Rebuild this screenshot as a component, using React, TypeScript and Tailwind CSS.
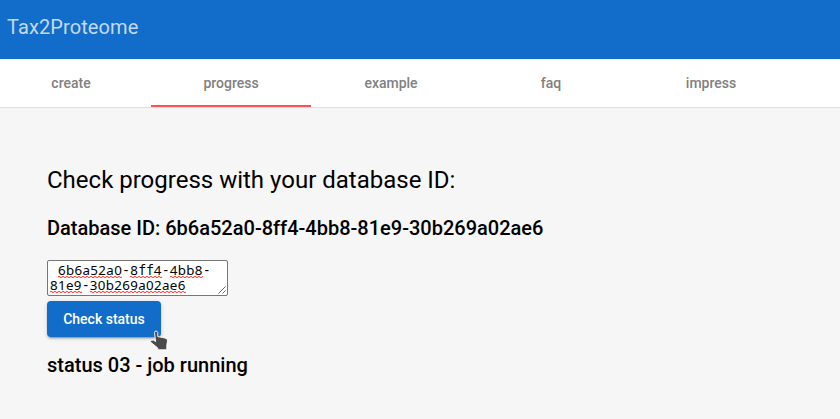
import React from "react";

const tabs = ["create", "progress", "example", "faq", "impress"];

const Misspelled = ({ children }: { children: React.ReactNode }) => (
  <span className="bg-[linear-gradient(90deg,#ff5050_50%,#ffd8d8_50%),linear-gradient(90deg,#ffd8d8_50%,#ff5050_50%)] bg-[length:4px_1px,4px_1px] bg-[position:0_calc(100%_-_2px),0_calc(100%_-_1px)] bg-repeat-x font-['Noto_Sans',sans-serif] tracking-[0.35px]">
    {children}
  </span>
);

export default function App() {
  return (
    <div className="min-h-[419px] bg-[#f6f6f6] font-[Roboto,sans-serif] text-black">
      <header className="flex h-[59px] items-start bg-[#116cca] pl-[7px] pt-[11px]">
        <h1 className="text-[20px] font-normal leading-8 tracking-[0.1px] text-white/75">Tax2Proteome</h1>
      </header>
      <nav className="flex h-[49px] border-b border-[#dfdfdf] bg-white pr-[49px]">
        {tabs.map((tab) => (
          <button
            key={tab}
            className={
              tab === "progress"
                ? "w-40 shrink-0 border-b-2 border-[#ff5252] pt-0.5 text-sm font-medium text-[#808080] first:-ml-[9px]"
                : "w-40 shrink-0 border-b-2 border-transparent pt-0.5 text-sm font-medium text-[#808080] first:-ml-[9px]"
            }
          >
            {tab}
          </button>
        ))}
      </nav>
      <main className="flex flex-col items-start pl-[47px] pt-14">
        <h2 className="text-[24px] font-normal leading-8">Check progress with your database ID:</h2>
        <h3 className="mt-4 text-[20px] font-medium leading-8">
          Database ID: 6b6a52a0-8ff4-4bb8-81e9-30b269a02ae6
        </h3>
        <div className="relative mt-4 h-9 w-[181px] rounded-[2px] border border-[#767676] bg-white px-0.5 py-[2px] font-['DejaVu_Sans_Mono',monospace] text-[13.333px] leading-[15px]">
          <div className="h-[15px] whitespace-pre">
            {" "}
            <Misspelled>6b6a52a0</Misspelled>-
            <Misspelled>
              8<span className="font-['DejaVu_Sans_Mono',monospace] tracking-[-0.2px]">ff</span>4
            </Misspelled>
            -<Misspelled>4bb8</Misspelled>-
          </div>
          <div className="h-[15px]">
            <Misspelled>81e9</Misspelled>-<Misspelled>30b269a02ae6</Misspelled>
          </div>
          <svg className="absolute bottom-px right-px h-2 w-2" viewBox="0 0 8 8" fill="none" stroke="#555">
            <path d="M0.5 7.5 7.5 0.5M4.5 7.5 7.5 4.5" strokeWidth="0.9" />
          </svg>
        </div>
        <div className="relative mt-[5px]">
          <button className="h-9 w-[114px] rounded bg-[#116cca] text-sm font-medium text-white shadow-[0_3px_1px_-2px_rgba(0,0,0,0.2),0_2px_2px_0_rgba(0,0,0,0.14),0_1px_5px_0_rgba(0,0,0,0.12)]">
            Check status
          </button>
          <svg className="absolute left-[102px] top-[28px] h-[22px] w-[20px]" viewBox="0 0 20 22">
            <path
              d="M5.5 3.5C5.5 1.6 8.5 1.6 8.8 3.5V7.6L16 9Q18.8 9.6 18.6 12L17.8 15.5V20.8H8.8V19L1.2 12.8Q2 10.4 4.6 11.2L6.6 12.6Z"
              fill="#4a4a4a"
              stroke="#fff"
              strokeWidth="0.9"
              strokeLinejoin="round"
            />
          </svg>
        </div>
        <h3 className="mt-3 text-[20px] font-medium leading-8">status 03 - job running</h3>
      </main>
    </div>
  );
}
